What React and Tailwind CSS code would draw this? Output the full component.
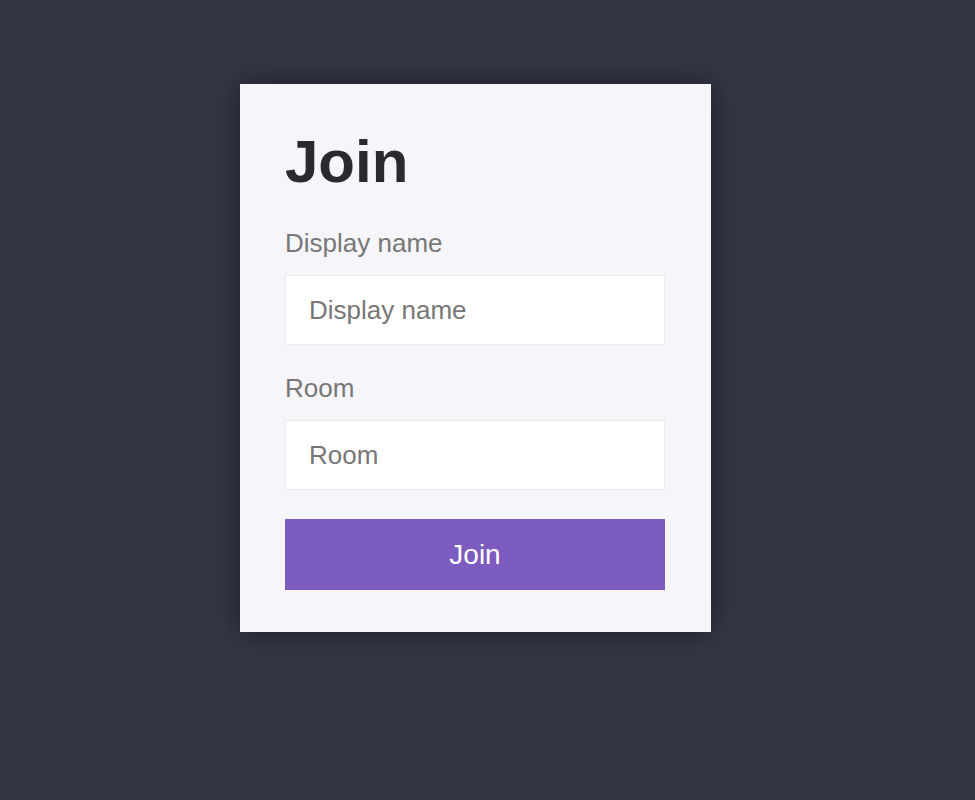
export default function App() {
  const font = { fontFamily: '"Liberation Sans", Arial, sans-serif' };
  return (
    <div className="min-h-[800px] w-full bg-[#333744] pt-[84px] pl-[240px]" style={font}>
      <div className="w-[471px] bg-[#f5f5fa] pt-[48px] pb-[42px] pl-[45px] pr-[46px] shadow-[0_0_30px_rgba(0,0,0,0.45)]">
        <h1 className="text-[60px] leading-[60px] font-bold text-[#2a2a2e]">Join</h1>
        <label className="block mt-[36px] text-[26px] leading-[30px] text-[#777777]">Display name</label>
        <input
          className="mt-[17px] block w-full h-[70px] border border-[#ececf0] bg-white pl-[23px] text-[26px] text-[#555] placeholder:text-[#777777] outline-none"
          placeholder="Display name"
          style={font}
        />
        <label className="block mt-[28px] text-[26px] leading-[30px] text-[#777777]">Room</label>
        <input
          className="mt-[17px] block w-full h-[70px] border border-[#ececf0] bg-white pl-[23px] text-[26px] text-[#555] placeholder:text-[#777777] outline-none"
          placeholder="Room"
          style={font}
        />
        <button
          className="mt-[29px] block w-full h-[71px] bg-[#7c5cbf] text-white text-[28px]"
          style={font}
        >
          Join
        </button>
      </div>
    </div>
  );
}
